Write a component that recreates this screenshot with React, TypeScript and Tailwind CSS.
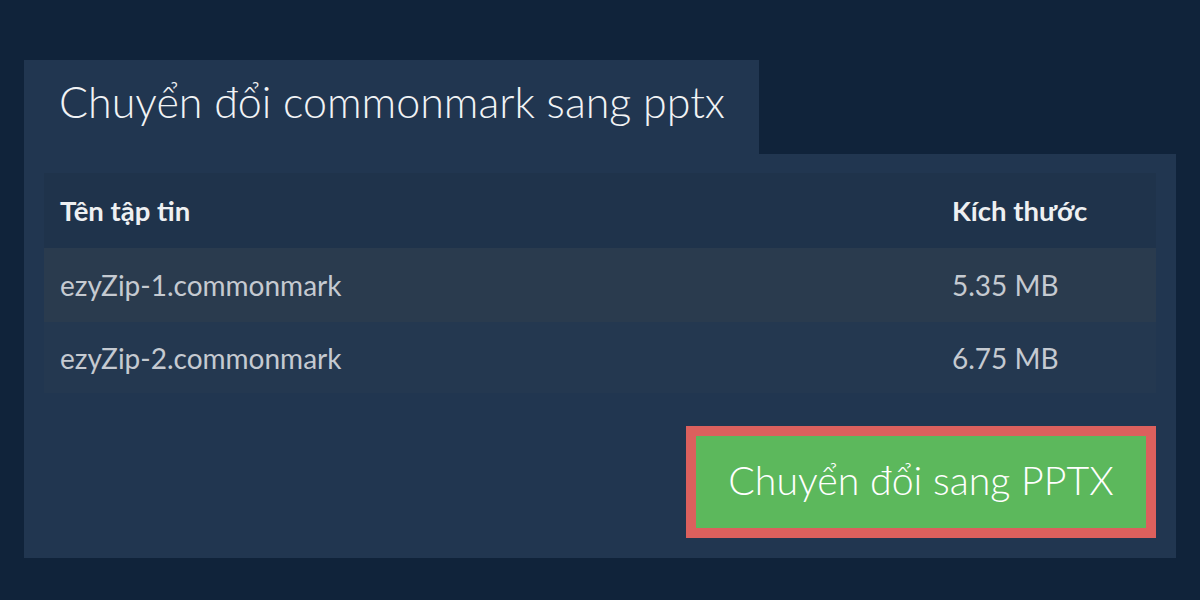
const files = [
  { name: "ezyZip-1.commonmark", size: "5.35 MB" },
  { name: "ezyZip-2.commonmark", size: "6.75 MB" },
];

export default function App() {
  return (
    <div
      className="w-[1200px] h-[600px] bg-[#10233a] px-[24px] pt-[60px]"
      style={{ fontFamily: "Lato, 'Noto Sans', sans-serif" }}
    >
      {/* Tab title */}
      <div className="inline-flex h-[94px] items-center bg-[#213650] pl-[35px] pr-[34px]">
        <h1 className="text-[43px] font-light leading-none text-[#f1f3f5] pb-[12px]">
          Chuyển đổi commonmark sang pptx
        </h1>
      </div>

      {/* Panel */}
      <div className="bg-[#213650] px-[20px] pt-[19px] pb-[20px]">
        <table className="w-full border-collapse">
          <thead>
            <tr className="h-[75px] bg-[#1f334b]">
              <th className="pl-[16px] text-left text-[27.5px] font-bold text-[#eef0f2]">Tên tập tin</th>
              <th className="w-[220px] pl-[16px] text-left text-[27.5px] font-bold text-[#eef0f2]">Kích thước</th>
            </tr>
          </thead>
          <tbody>
            {files.map((f, i) => (
              <tr key={f.name} className={i === 0 ? "h-[74px] bg-[#2a3b4e]" : "h-[71px] bg-[#243850]"}>
                <td className="pl-[16px] text-[28px] text-[#c5cad1]">{f.name}</td>
                <td className="pl-[16px] text-[28px] text-[#c5cad1]">{f.size}</td>
              </tr>
            ))}
          </tbody>
        </table>

        <div className="flex justify-end mt-[33px]">
          <button className="w-[470px] h-[112px] border-[10px] border-[#dc605d] bg-[#5cb85c] text-[39.3px] font-light text-white pb-[4px]">
            Chuyển đổi sang PPTX
          </button>
        </div>
      </div>
    </div>
  );
}
